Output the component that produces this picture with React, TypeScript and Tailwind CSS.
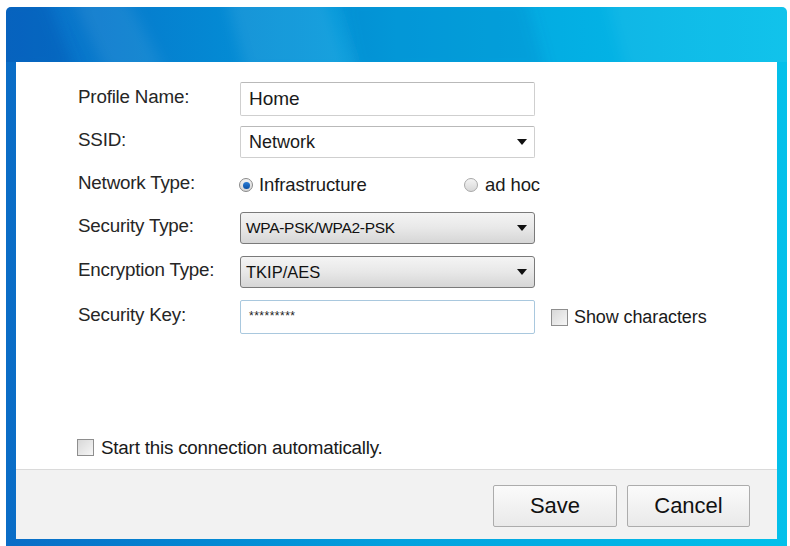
import React from "react";

const font = { fontFamily: '"Liberation Sans", Arial, sans-serif' };

function Arrow() {
  return (
    <svg width="10" height="6" viewBox="0 0 10 6" className="shrink-0">
      <path d="M0 0 L10 0 L5 6 Z" fill="#111" />
    </svg>
  );
}

function Label({ children }: { children: React.ReactNode }) {
  return <div className="w-[162px] text-[18.8px] text-[#262626] leading-none -mt-[4px] tracking-[-0.2px]">{children}</div>;
}

export default function App() {
  return (
    <div className="w-[790px] h-[546px] bg-white overflow-hidden" style={font}>
      <div className="relative overflow-hidden ml-[6px] mt-[7px] w-[781px] h-[539px] rounded-t-[5px] bg-gradient-to-r from-[#0a6cc6] via-[#04a1de] to-[#04c0ea] pt-[55px] px-[10px] pb-[7px] flex">
        <svg className="absolute left-0 top-0 pointer-events-none" width="781" height="55" viewBox="0 0 781 55">
          <defs>
            <filter id="soft" x="-20%" y="-50%" width="140%" height="200%">
              <feGaussianBlur stdDeviation="7" />
            </filter>
          </defs>
          <g filter="url(#soft)">
            <polygon points="-20,-10 40,-10 70,65 -20,65" fill="#0a4fb0" opacity="0.35" />
            <polygon points="65,-10 120,-10 160,65 100,65" fill="#ffffff" opacity="0.07" />
            <polygon points="220,-10 320,-10 345,65 240,65" fill="#ffffff" opacity="0.08" />
            <polygon points="335,-10 520,-10 540,65 350,65" fill="#0060b0" opacity="0.15" />
            <polygon points="600,-10 800,-10 800,65 620,65" fill="#ffffff" opacity="0.05" />
          </g>
        </svg>
        <div className="relative flex-1 bg-white flex flex-col">
          <div className="flex-1 flex flex-col pl-[62px] pt-[20px]">
            {/* Profile name */}
            <div className="flex items-center h-[34px]">
              <Label>Profile Name:</Label>
              <div className="w-[295px] h-[34px] border border-[#cfcfcf] border-t-[#b9b9b9] rounded-[2px] flex items-center px-[8px] text-[19px] text-[#1a1a1a]">
                Home
              </div>
            </div>
            {/* SSID */}
            <div className="flex items-center h-[32px] mt-[10px]">
              <Label>SSID:</Label>
              <div className="w-[295px] h-[32px] border border-[#cfcfcf] border-t-[#b9b9b9] rounded-[2px] flex items-center justify-between pl-[8px] pr-[7px] text-[18px] text-[#1a1a1a]">
                <span>Network</span>
                <Arrow />
              </div>
            </div>
            {/* Network type */}
            <div className="flex items-center h-[32px] mt-[11px]">
              <Label>Network Type:</Label>
              <div className="w-[300px] flex items-center text-[18.5px] text-[#1a1a1a] tracking-[-0.1px]">
                <div className="w-[14px] h-[14px] rounded-full border border-[#8a8a8a] bg-gradient-to-b from-[#f2f2f2] to-[#d6d6d6] flex items-center justify-center ml-[-1px]">
                  <div className="w-[7px] h-[7px] rounded-full bg-gradient-to-b from-[#2a7dd6] to-[#0b4fa3]" />
                </div>
                <span className="ml-[6px]">Infrastructure</span>
                <div className="ml-auto flex items-center">
                  <div className="w-[14px] h-[14px] rounded-full border border-[#a8a8a8] bg-gradient-to-b from-[#f4f4f4] to-[#d8d8d8]" />
                  <span className="ml-[7px]">ad hoc</span>
                </div>
              </div>
            </div>
            {/* Security type */}
            <div className="flex items-center h-[32px] mt-[11px]">
              <Label>Security Type:</Label>
              <div className="w-[295px] h-[32px] border border-[#7a7a7a] rounded-[3px] bg-gradient-to-b from-[#f4f4f4] via-[#e8e8e8] to-[#d6d6d6] flex items-center justify-between pl-[5px] pr-[7px] text-[15.5px] text-[#111] tracking-[-0.3px]">
                <span>WPA-PSK/WPA2-PSK</span>
                <Arrow />
              </div>
            </div>
            {/* Encryption */}
            <div className="flex items-center h-[32px] mt-[12px]">
              <Label>Encryption Type:</Label>
              <div className="w-[295px] h-[32px] border border-[#7a7a7a] rounded-[3px] bg-gradient-to-b from-[#f4f4f4] via-[#e8e8e8] to-[#d6d6d6] flex items-center justify-between pl-[5px] pr-[7px] text-[16.5px] text-[#111]">
                <span>TKIP/AES</span>
                <Arrow />
              </div>
            </div>
            {/* Security key */}
            <div className="flex items-center h-[34px] mt-[12px]">
              <Label>Security Key:</Label>
              <div className="w-[295px] h-[34px] border border-[#a9c8de] rounded-[2px] flex items-start pt-[6px] px-[8px] text-[12px] text-[#222] tracking-[0.5px]">
                *********
              </div>
              <div className="ml-[16px] w-[17px] h-[17px] border border-[#8e8e8e] bg-gradient-to-br from-[#d8d8d8] to-[#f6f6f6]" />
              <span className="ml-[6px] text-[18px] text-[#1a1a1a] tracking-[-0.1px]">Show characters</span>
            </div>
            <div className="flex-1" />
            <div className="flex items-center mb-[7px] -ml-[1px]">
              <div className="w-[17px] h-[17px] border border-[#8e8e8e] bg-gradient-to-br from-[#d8d8d8] to-[#f6f6f6]" />
              <span className="ml-[7px] text-[18.8px] text-[#1a1a1a] tracking-[-0.2px]">Start this connection automatically.</span>
            </div>
          </div>
          {/* Footer */}
          <div className="h-[70px] bg-[#f2f2f2] border-t border-[#dadada] flex items-center justify-end pr-[27px] pt-[2px] gap-[10px]">
            <button className="w-[124px] h-[42px] border border-[#acacac] bg-gradient-to-b from-[#fbfbfb] to-[#e9e9e9] text-[22px] text-[#111] rounded-[2px]" style={font}>
              Save
            </button>
            <button className="w-[123px] h-[42px] border border-[#acacac] bg-gradient-to-b from-[#fbfbfb] to-[#e9e9e9] text-[22px] text-[#111] rounded-[2px]" style={font}>
              Cancel
            </button>
          </div>
        </div>
      </div>
    </div>
  );
}
